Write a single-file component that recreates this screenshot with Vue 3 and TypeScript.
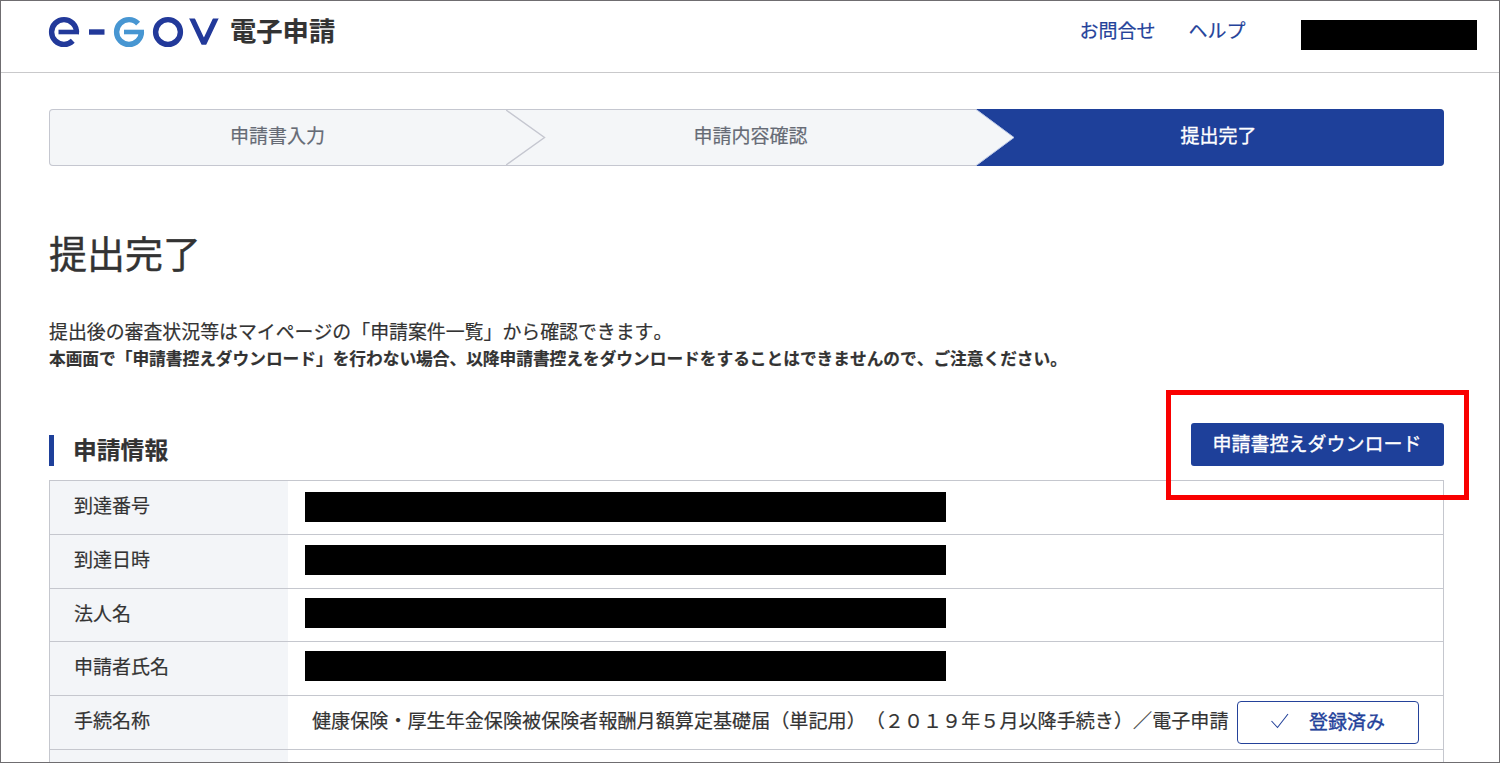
<script setup lang="ts">
interface InfoRow {
  label: string
  value?: string
  status?: string
}

const rows: InfoRow[] = [
  { label: '到達番号' },
  { label: '到達日時' },
  { label: '法人名' },
  { label: '申請者氏名' },
  {
    label: '手続名称',
    value: '健康保険・厚生年金保険被保険者報酬月額算定基礎届（単記用）（２０１９年５月以降手続き）／電子申請',
    status: '登録済み',
  },
]
</script>

<template>
  <div class="page">
    <header class="header">
      <div class="brand">
        <svg class="logo" width="172" height="34" viewBox="48 15 172 34" role="img" aria-label="e-GOV" fill="none">
          <clipPath id="logo-v">
            <rect x="186" y="18.6" width="36" height="26.2" />
          </clipPath>
          <g stroke="#22399a" stroke-width="5.4">
            <circle cx="64" cy="32" r="12.4" stroke-dasharray="69.6 8.4" transform="rotate(45 64 32)" />
            <line x1="58.5" y1="32" x2="79" y2="32" stroke-width="4.6" />
            <line x1="89" y1="32" x2="104.5" y2="32" />
            <circle cx="168" cy="32" r="12.4" />
            <polyline
              points="190.4,15 203.9,43.6 217.4,15"
              stroke-width="5.2"
              stroke-linejoin="miter"
              clip-path="url(#logo-v)"
            />
          </g>
          <g stroke="#4796d2" stroke-width="5.4">
            <circle cx="129" cy="32" r="12.4" stroke-dasharray="68.2 9.8" />
            <line x1="124" y1="32" x2="144" y2="32" stroke-width="4.6" />
          </g>
        </svg>
        <span class="brand-name">電子申請</span>
      </div>
      <nav class="nav">
        <a>お問合せ</a>
        <a>ヘルプ</a>
        <span class="account"></span>
      </nav>
    </header>

    <main class="main">
      <div class="steps">
        <div class="step first">申請書入力</div>
        <svg class="chevron" width="40" height="55" viewBox="0 0 40 55">
          <path d="M0 0L38.5 27.5L0 55" fill="none" stroke="#c5c7d0" stroke-width="1.4" />
        </svg>
        <div class="step second">申請内容確認</div>
        <svg class="chevron" width="39" height="57" viewBox="0 0 39 57">
          <path d="M0 0H39V57H0L38 28.5Z" fill="#1e409a" />
          <path d="M0 .5L38 28.5L0 56.5" fill="none" stroke="#b8c5e4" stroke-width="1" />
        </svg>
        <div class="step current">提出完了</div>
      </div>

      <h1>提出完了</h1>
      <p class="lead">提出後の審査状況等はマイページの「申請案件一覧」から確認できます。</p>
      <p class="notice">本画面で「申請書控えダウンロード」を行わない場合、以降申請書控えをダウンロードをすることはできませんので、ご注意ください。</p>

      <section>
        <div class="section-head">
          <h2>申請情報</h2>
          <div class="download-wrap">
            <button class="download">申請書控えダウンロード</button>
            <span class="highlight"></span>
          </div>
        </div>
        <div class="table">
          <div v-for="row in rows" :key="row.label" class="row">
            <div class="label">{{ row.label }}</div>
            <div class="cell">
              <span v-if="!row.value" class="redacted"></span>
              <template v-else>
                <span class="value">{{ row.value }}</span>
                <button class="status">
                  <svg width="20" height="18" viewBox="0 0 20 18">
                    <path d="M1.5 9L7.5 15.5L18 2" fill="none" stroke="#24429a" stroke-width="1.1" />
                  </svg>
                  <span>{{ row.status }}</span>
                </button>
              </template>
            </div>
          </div>
          <div class="row">
            <div class="label"></div>
            <div class="cell"></div>
          </div>
        </div>
      </section>
    </main>
  </div>
</template>

<style>
body {
  background: #fff;
  overflow: hidden;
}
</style>

<style scoped>
.page {
  box-sizing: border-box;
  height: 763px;
  overflow: hidden;
  border: 1px solid #6f6d70;
  background: #fff;
  color: #333;
  font-family: "Noto Sans CJK JP", sans-serif;
  font-size: 19px;
  font-kerning: none;
  text-spacing-trim: space-all;
  -webkit-text-stroke: 0.2px currentColor;
}
.header {
  display: flex;
  justify-content: space-between;
  box-sizing: border-box;
  height: 72px;
  padding: 0 22.5px 0 47px;
  border-bottom: 1px solid #c9c9cb;
}
.brand {
  display: flex;
  align-items: flex-start;
  gap: 10px;
}
.logo {
  display: block;
  margin-top: 14px;
}
.brand-name {
  margin-top: 11px;
  font-size: 26.3px;
  font-weight: 700;
  line-height: 36px;
}
.nav {
  display: flex;
  align-items: flex-start;
  color: #24429a;
}
.nav a {
  margin: 14px 33px 0 0;
  line-height: 30px;
}
.account {
  width: 176px;
  height: 30px;
  margin: 19px 0 0 22px;
  background: #000;
}
.main {
  padding: 36px 55px 0 48px;
}
.steps {
  display: flex;
  height: 57px;
  border-radius: 4px;
  overflow: hidden;
  color: #666b75;
  background: #f4f6f8;
  box-shadow: inset 0 0 0 1px #c5c7d0;
}
.step {
  display: flex;
  align-items: center;
  justify-content: center;
  box-sizing: border-box;
  padding-bottom: 6px;
}
.first {
  width: 457px;
}
.second {
  width: 430px;
  padding-right: 21px;
}
.current {
  flex: 1;
  padding-right: 22px;
  color: #fff;
  background: #1e409a;
  -webkit-text-stroke-width: 0.35px;
}
.chevron {
  display: block;
  flex: none;
  align-self: center;
}
h1 {
  margin: 58px 0 0;
  font-size: 38px;
  font-weight: 400;
  line-height: 56px;
  -webkit-text-stroke-width: 0.4px;
}
.lead,
.notice {
  margin: 0;
  white-space: nowrap;
}
.lead {
  margin-top: 37px;
  font-size: 18.9px;
  line-height: 28px;
}
.notice {
  font-size: 16.7px;
  font-weight: 700;
  line-height: 26px;
}
.section-head {
  display: flex;
  align-items: flex-end;
  justify-content: space-between;
  height: 43px;
  margin: 52px 0 14px;
}
h2 {
  box-sizing: border-box;
  height: 31px;
  margin: 0;
  padding-left: 19px;
  border-left: 5px solid #1e409a;
  font-size: 23.8px;
  font-weight: 700;
  line-height: 27px;
}
.download-wrap {
  position: relative;
}
.download {
  display: block;
  box-sizing: border-box;
  width: 253px;
  height: 43px;
  padding: 0 1px 5px 0;
  border: 0;
  border-radius: 3px;
  background: #1e409a;
  color: #fff;
  font: 400 19px "Noto Sans CJK JP", sans-serif;
  -webkit-text-stroke-width: 0.35px;
}
.highlight {
  position: absolute;
  z-index: 2;
  inset: -33px -25px -34px;
  border: 5px solid #f90000;
}
.table {
  border: 1px solid #c5c7ce;
}
.row {
  display: flex;
  box-sizing: border-box;
  height: 53.8px;
  border-bottom: 1px solid #c5c7ce;
}
.label {
  box-sizing: border-box;
  width: 238px;
  padding-left: 24px;
  background: #f3f5f8;
  line-height: 48px;
}
.cell {
  display: flex;
  flex: 1;
  align-items: center;
  padding-left: 17px;
}
.redacted {
  width: 641px;
  height: 30px;
  background: #000;
}
.row:nth-child(2) .redacted {
  margin-bottom: 2px;
}
.row:nth-child(3) .redacted {
  margin-bottom: 4px;
}
.row:nth-child(4) .redacted {
  margin-bottom: 5px;
}
.value {
  width: 925px;
  padding-left: 7px;
  box-sizing: border-box;
  font-size: 19.1px;
  line-height: 49px;
  white-space: nowrap;
  align-self: flex-start;
}
.status {
  display: flex;
  align-items: center;
  gap: 19px;
  box-sizing: border-box;
  width: 182px;
  height: 43px;
  margin-left: 7px;
  padding: 0 0 4px 32px;
  border: 1px solid #24429a;
  border-radius: 4px;
  background: #fff;
  color: #24429a;
  font: 400 19px "Noto Sans CJK JP", sans-serif;
  -webkit-text-stroke-width: 0.35px;
}
</style>
